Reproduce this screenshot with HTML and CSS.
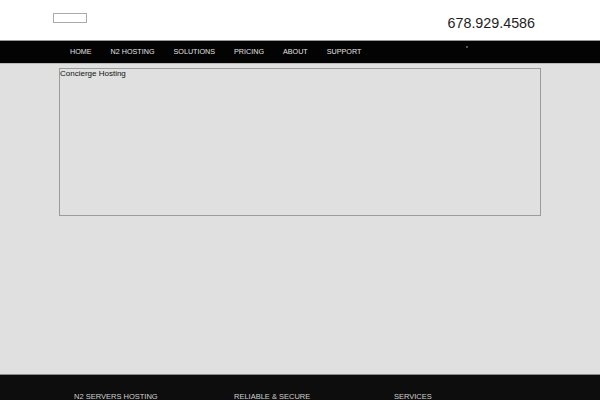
FILE: index.html
```html
<!DOCTYPE html>
<html>
<head>
<meta charset="utf-8">
<link rel="stylesheet" href="styles.css">
</head>
<body>
<header class="top">
  <div class="logo"></div>
  <div class="phone">678.929.4586</div>
</header>
<nav class="nav">
  <ul class="menu">
    <li>HOME</li>
    <li>N2 HOSTING</li>
    <li>SOLUTIONS</li>
    <li>PRICING</li>
    <li>ABOUT</li>
    <li>SUPPORT</li>
  </ul>
  <span class="dot"></span>
</nav>
<main class="main">
  <section class="box">Concierge Hosting</section>
</main>
<footer class="footer">
  <div class="col">N2 SERVERS HOSTING</div>
  <div class="col">RELIABLE &amp; SECURE</div>
  <div class="col">SERVICES</div>
</footer>
</body>
</html>
```
FILE: styles.css
```css
html, body {
  margin: 0;
  padding: 0;
}
body {
  background: #e0e0e0;
  font-family: "Liberation Sans", Arial, sans-serif;
}
.top {
  background: #ffffff;
  height: 40px;
  display: flex;
  justify-content: space-between;
  align-items: flex-start;
  padding: 0 65px 0 53px;
  box-sizing: border-box;
}
.logo {
  margin-top: 13px;
  width: 34px;
  height: 10px;
  box-sizing: border-box;
  border: 1px solid #aaaaaa;
}
.phone {
  margin-top: 15px;
  font-size: 14.3px;
  color: #1e1e1e;
}
.nav {
  position: relative;
  background: #030303;
  height: 22px;
  border-top: 1px solid #9a9a9a;
  border-bottom: 1px solid #b8b8b8;
}
.menu {
  list-style: none;
  margin: 0;
  padding: 0 0 0 70px;
  display: flex;
  gap: 19px;
  height: 21px;
  align-items: center;
  font-size: 7.2px;
  color: #e2e2e2;
}
.dot {
  position: absolute;
  left: 466px;
  top: 5px;
  width: 2px;
  height: 2px;
  background: #555;
}
.main {
  min-height: 310px;
  padding-top: 4px;
  box-sizing: border-box;
}
.box {
  margin-left: 59px;
  width: 482px;
  height: 148px;
  box-sizing: border-box;
  border: 1px solid #9c9c9c;
  font-size: 8px;
  color: #111;
  line-height: 9px;
}
.footer {
  background: #0d0d0d;
  border-top: 1px solid #8a8a8a;
  display: flex;
  padding: 17px 0 30px 74px;
  font-size: 7.5px;
  color: #cfcfcf;
}
.col {
  width: 160px;
}
```
